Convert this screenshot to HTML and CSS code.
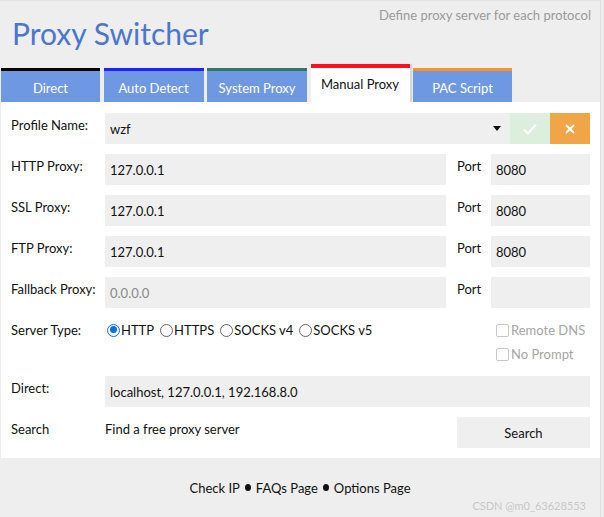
FILE: index.html
```html
<!DOCTYPE html>
<html>
<head>
<meta charset="utf-8">
<link rel="stylesheet" href="styles.css">
</head>
<body>
<div class="app">
  <header class="header">
    <h1 class="title">Proxy Switcher</h1>
    <div class="subtitle">Define proxy server for each protocol</div>
  </header>
  <nav class="tabs">
    <div class="tab tab-direct">Direct</div>
    <div class="tab tab-auto">Auto Detect</div>
    <div class="tab tab-system">System Proxy</div>
    <div class="tab tab-manual active">Manual Proxy</div>
    <div class="tab tab-pac">PAC Script</div>
  </nav>
  <main class="panel">
    <div class="label">Profile Name:</div>
    <div class="profile">
      <div class="select"><span>wzf</span><span class="caret"></span></div>
      <div class="btn-ok"><svg width="16" height="14" viewBox="0 0 16 14"><path d="M2 7.5 L6 11.5 L14 2.5" fill="none" stroke="#fff" stroke-width="2.2"/></svg></div>
      <div class="btn-cancel"><svg width="12" height="12" viewBox="0 0 12 12"><path d="M2 2 L10 10 M10 2 L2 10" fill="none" stroke="#fff" stroke-width="2"/></svg></div>
    </div>

    <div class="label">HTTP Proxy:</div>
    <div class="input">127.0.0.1</div>
    <div class="port-label">Port</div>
    <div class="input port">8080</div>

    <div class="label">SSL Proxy:</div>
    <div class="input">127.0.0.1</div>
    <div class="port-label">Port</div>
    <div class="input port">8080</div>

    <div class="label">FTP Proxy:</div>
    <div class="input">127.0.0.1</div>
    <div class="port-label">Port</div>
    <div class="input port">8080</div>

    <div class="label">Fallback Proxy:</div>
    <div class="input placeholder">0.0.0.0</div>
    <div class="port-label">Port</div>
    <div class="input port"></div>

    <div class="label type-label">Server Type:</div>
    <div class="radios">
      <span class="radio checked"></span><span class="rtext">HTTP</span>
      <span class="radio"></span><span class="rtext">HTTPS</span>
      <span class="radio"></span><span class="rtext">SOCKS v4</span>
      <span class="radio"></span><span class="rtext">SOCKS v5</span>
    </div>
    <div class="checks">
      <div class="check"><span class="box"></span>Remote DNS</div>
      <div class="check"><span class="box"></span>No Prompt</div>
    </div>

    <div class="label">Direct:</div>
    <div class="input wide">localhost, 127.0.0.1, 192.168.8.0</div>

    <div class="label">Search</div>
    <div class="find">Find a free proxy server</div>
    <div class="search-btn">Search</div>
  </main>
  <footer class="footer">
    <div class="links">Check IP <span class="dot"></span> FAQs Page <span class="dot"></span> Options Page</div>
    <div class="watermark">CSDN @m0_63628553</div>
  </footer>
</div>
</body>
</html>
```
FILE: styles.css
```css
* { box-sizing: border-box; }
html, body { margin: 0; padding: 0; }
body {
  background: #eeeeee;
  font-family: Lato, "Noto Sans", sans-serif;
  font-size: 13px;
  color: #111;
  width: 604px;
  height: 517px;
  overflow: hidden;
}
.app {
  width: 601px;
  height: 517px;
  border-top: 1px solid #e2e2e2;
  border-right: 1px solid #e0e0e0;
  display: flex;
  flex-direction: column;
}
.header {
  height: 63px;
  display: flex;
  justify-content: space-between;
  align-items: flex-start;
  padding: 0 9px 0 12px;
}
.title {
  margin: 13px 0 0 0;
  font-weight: normal;
  font-size: 30px;
  line-height: 38px;
  color: #4a76cf;
}
.subtitle {
  margin-top: 5px;
  color: #9a9a9a;
  font-size: 13px;
  line-height: 18px;
}
.tabs {
  display: flex;
  align-items: flex-end;
  gap: 3.5px;
  padding-left: 1px;
  height: 38px;
}
.tab {
  width: 100px;
  height: 34px;
  background: #6f98e3;
  color: #fff;
  border-top: 3px solid #000;
  display: flex;
  align-items: center;
  justify-content: center;
  padding-top: 2px;
}
.tab-direct { border-top-color: #000; width: 99px; }
.tab-auto { border-top-color: #2020ff; }
.tab-system { border-top-color: #33776a; }
.tab-manual {
  height: 38px;
  width: 99px;
  background: #fff;
  color: #111;
  border-top: 4px solid #ff1020;
  padding-top: 0;
  padding-bottom: 2px;
  box-shadow: 2px 0 1px #d6d6d6;
}
.tab-pac { border-top-color: #f7931e; width: 99px; }
.panel {
  background: #fff;
  margin-left: 1px;
  width: 599px;
  padding: 11px 10px 10px 10px;
  display: grid;
  grid-template-columns: 94px 341px 11px 34px 99px;
  grid-template-rows: 31px 31px 31px 31px 31px 48px 31px 31px;
  row-gap: 10px;
}
.label {
  grid-column: 1;
  padding-top: 4px;
  line-height: 16px;
}
.profile {
  grid-column: 2 / 6;
  display: flex;
}
.select {
  flex: 1;
  background: #efefef;
  display: flex;
  align-items: center;
  justify-content: space-between;
  padding: 0 9px 0 5px;
}
.caret {
  width: 0; height: 0;
  border-left: 4px solid transparent;
  border-right: 4px solid transparent;
  border-top: 5px solid #111;
}
.btn-ok, .btn-cancel {
  width: 40px;
  display: flex;
  align-items: center;
  justify-content: center;
}
.btn-ok { background: #dcefdc; }
.btn-cancel { background: #f0a647; }
.input {
  grid-column: 2;
  background: #efefef;
  padding: 0 5px;
  display: flex;
  align-items: center;
}
.input.port { grid-column: 5; }
.input.wide { grid-column: 2 / 6; }
.placeholder { color: #888; }
.port-label {
  grid-column: 4;
  padding-top: 4px;
  line-height: 16px;
}
.type-label { padding-top: 4px; }
.radios {
  grid-column: 2 / 4;
  display: flex;
  align-items: center;
  height: 24px;
  padding-left: 2px;
}
.radio {
  width: 13px; height: 13px;
  border-radius: 50%;
  border: 1px solid #666;
  margin-right: 1px;
  position: relative;
}
.radio.checked {
  border: 1.5px solid #0a6ee6;
}
.radio.checked::after {
  content: "";
  position: absolute;
  left: 1.5px; top: 1.5px;
  width: 7px; height: 7px;
  border-radius: 50%;
  background: #0a6ee6;
}
.rtext { margin-right: 6px; }
.checks {
  grid-column: 5;
  padding-left: 5px;
  display: flex;
  flex-direction: column;
  gap: 8px;
  padding-top: 4px;
  color: #a5a5a5;
}
.check {
  display: flex;
  align-items: center;
  height: 16px;
  white-space: nowrap;
}
.box {
  width: 13px; height: 13px;
  border: 1px solid #c8c8c8;
  border-radius: 2px;
  margin-right: 2px;
}
.find {
  grid-column: 2;
  padding-top: 4px;
  line-height: 16px;
}
.search-btn {
  grid-column: 4 / 6;
  background: #efefef;
  display: flex;
  align-items: center;
  justify-content: center;
}
.footer {
  flex: 1;
  position: relative;
  display: flex;
  align-items: center;
  justify-content: center;
}
.links { display: flex; align-items: center; gap: 5px; }
.dot {
  display: inline-block;
  width: 6px; height: 7px;
  border-radius: 50%;
  background: #111;
}
.watermark {
  position: absolute;
  right: 14px;
  bottom: 5px;
  font-size: 11px;
  color: #c8c8c8;
}
```
